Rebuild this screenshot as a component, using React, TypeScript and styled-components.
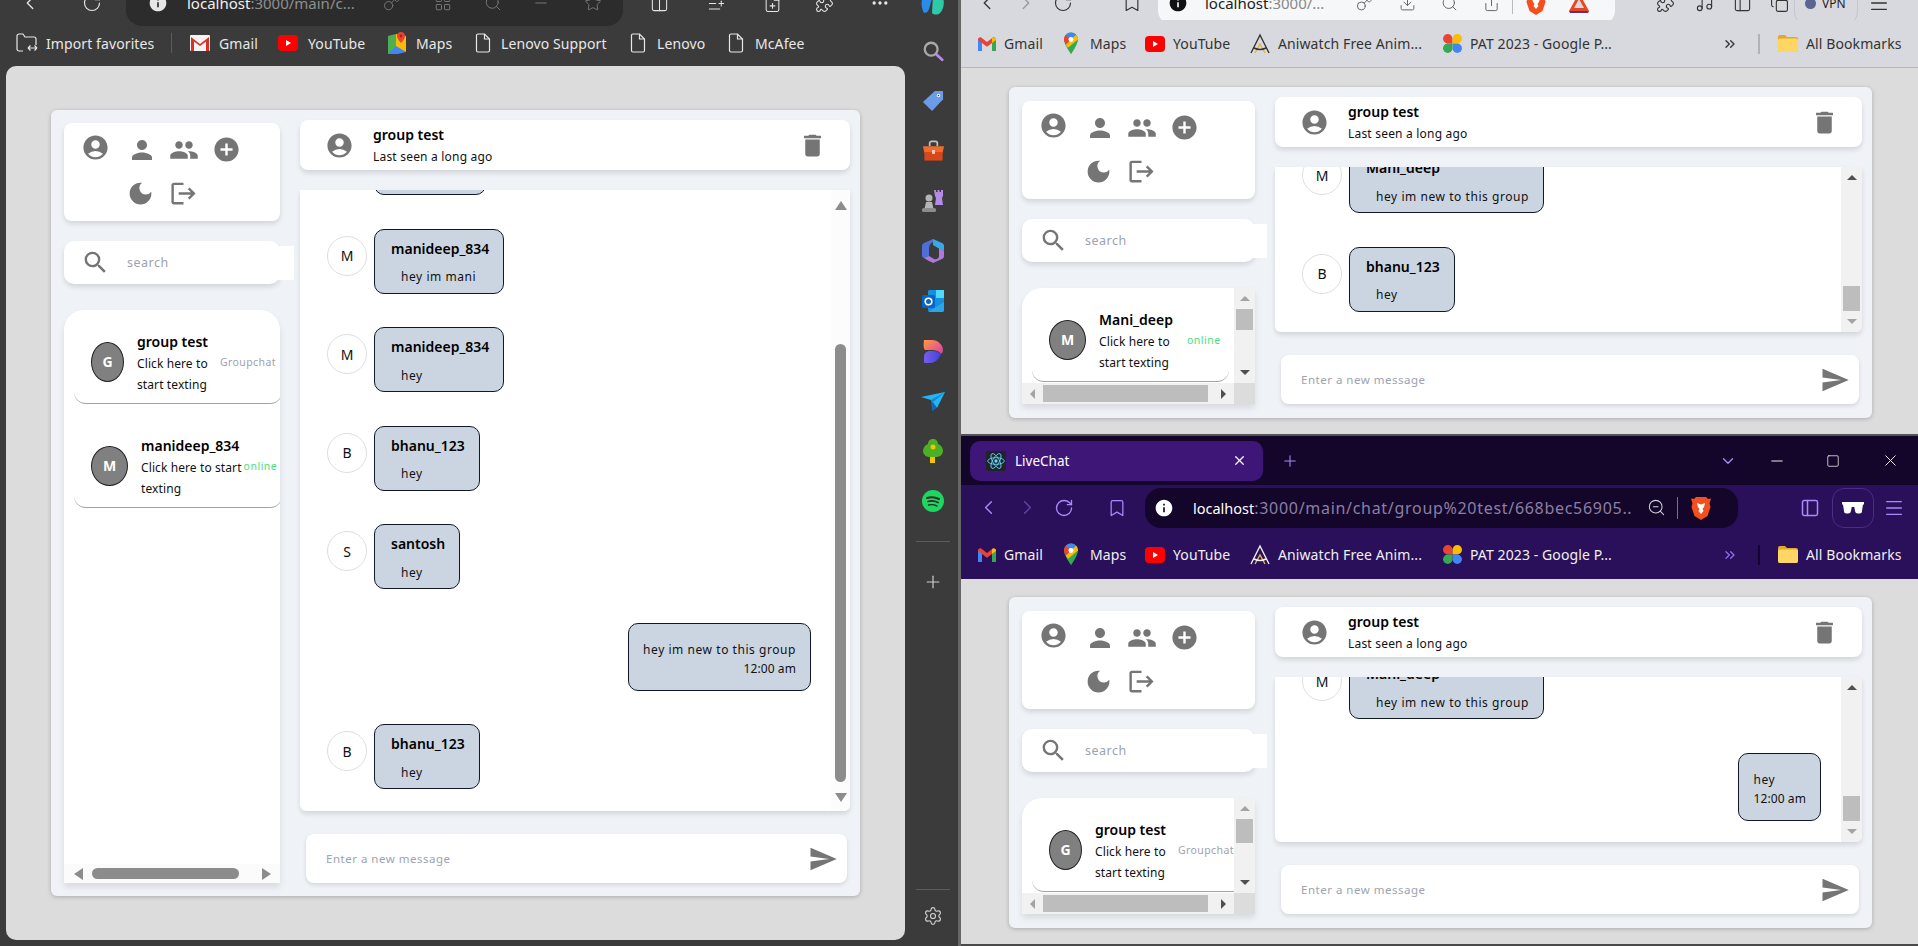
import React from "react";
import styled, { createGlobalStyle } from "styled-components";
import {
  MdAccountCircle,
  MdPerson,
  MdPeople,
  MdAddCircle,
  MdDarkMode,
  MdLogout,
  MdSearch,
  MdDelete,
  MdSend,
  MdInfo,
} from "react-icons/md";
import {
  ChevronLeft,
  ChevronRight,
  RotateCw,
  Bookmark as BookmarkIcon,
  Key,
  LayoutGrid,
  Search,
  Star,
  Columns2,
  ListPlus,
  FilePlus,
  MoreHorizontal,
  ZoomOut,
  Menu,
  Minus,
  Square,
  X,
  Plus,
  ChevronDown,
  ChevronsRight,
  PanelLeft,
  Settings,
  Music,
  Puzzle,
  Download,
  Share,
  Copy,
} from "lucide-react";

const GlobalStyle = createGlobalStyle`
  html, body {
    margin: 0;
    padding: 0;
    background: #3b3b3b;
  }
  * {
    box-sizing: border-box;
  }
`;

const Screen = styled.div`
  width: 1918px;
  height: 946px;
  display: flex;
  overflow: hidden;
  font-family: "Noto Sans", "Open Sans", sans-serif;
`;

/* ---------- browser chrome ---------- */

const LeftWindow = styled.div`
  width: 961px;
  flex: none;
  background: #3b3b3b;
  border-right: 3px solid #666;
  display: flex;
`;

const LeftMain = styled.div`
  width: 905px;
  flex: none;
  display: flex;
  flex-direction: column;
  padding-bottom: 6px;
`;

const RightStack = styled.div`
  flex: 1;
  display: flex;
  flex-direction: column;
`;

const TopBar = styled.div<{ $h: number }>`
  height: ${(p) => p.$h}px;
  overflow: hidden;
`;

const ClippedRow = styled.div<{ $color: string }>`
  height: 46px;
  margin-top: -20px;
  display: flex;
  align-items: center;
  color: ${(p) => p.$color};
`;

const Slot = styled.div<{ $w: number; $ml?: number; $color?: string }>`
  width: ${(p) => p.$w}px;
  margin-left: ${(p) => p.$ml || 0}px;
  flex: none;
  display: flex;
  align-items: center;
  justify-content: center;
  ${(p) => (p.$color ? `color: ${p.$color};` : "")}
`;

const AddressBar = styled.div<{ $bg: string; $w: number; $ml: number; $h?: number }>`
  width: ${(p) => p.$w}px;
  margin-left: ${(p) => p.$ml}px;
  height: ${(p) => p.$h || 46}px;
  flex: none;
  background: ${(p) => p.$bg};
  border-radius: 16px;
  display: flex;
  align-items: center;
`;

const Url = styled.span<{ $w: number; $ml: number; $color: string; $dim: string; $wide?: boolean }>`
  width: ${(p) => p.$w}px;
  margin-left: ${(p) => p.$ml}px;
  flex: none;
  font-size: ${(p) => (p.$wide ? 16 : 15)}px;
  letter-spacing: ${(p) => (p.$wide ? 0.7 : 0)}px;
  white-space: nowrap;
  overflow: hidden;
  color: ${(p) => p.$dim};
  & > b {
    font-weight: 400;
    font-size: ${(p) => (p.$wide ? 14.5 : 15)}px;
    letter-spacing: 0;
    color: ${(p) => p.$color};
  }
`;

const Separator = styled.div<{ $color: string; $ml: number; $h: number; $w?: number }>`
  width: ${(p) => p.$w || 1}px;
  height: ${(p) => p.$h}px;
  margin-left: ${(p) => p.$ml}px;
  flex: none;
  background: ${(p) => p.$color};
`;

const BookmarkBar = styled.div<{ $h: number; $line?: string; $bg?: string; $pb?: number }>`
  height: ${(p) => p.$h}px;
  padding-bottom: ${(p) => p.$pb || 0}px;
  flex: none;
  display: flex;
  align-items: center;
  ${(p) => (p.$line ? `border-bottom: 1px solid ${p.$line};` : "")}
  ${(p) => (p.$bg ? `background: ${p.$bg};` : "")}
`;

const BookmarkItem = styled.div<{ $ml: number }>`
  margin-left: ${(p) => p.$ml}px;
  flex: none;
  display: flex;
  align-items: center;
`;

const BookmarkLabel = styled.span<{ $w: number; $ml: number; $color: string }>`
  width: ${(p) => p.$w}px;
  margin-left: ${(p) => p.$ml}px;
  font-size: 14px;
  letter-spacing: 0.1px;
  white-space: nowrap;
  color: ${(p) => p.$color};
`;

const Viewport = styled.div`
  flex: 1;
  min-height: 0;
  margin-left: 6px;
  background: #dcdcdc;
  border-radius: 10px;
  padding: 44px 0 0 45px;
`;

const SideRail = styled.div`
  flex: 1;
  min-width: 0;
  overflow: hidden;
  display: flex;
  flex-direction: column;
  align-items: center;
  padding-left: 3px;
`;

const RailLogo = styled.div`
  height: 26px;
  margin-top: -8px;
  margin-bottom: 8px;
  flex: none;
`;

const RailIcon = styled.div`
  width: 30px;
  height: 50px;
  flex: none;
  display: flex;
  align-items: center;
  justify-content: center;
`;

const RailRule = styled.div<{ $mt: number }>`
  width: 34px;
  height: 1px;
  flex: none;
  background: #5c5c5c;
  margin-top: ${(p) => p.$mt}px;
`;

const RailButton = styled.div<{ $h: number }>`
  height: ${(p) => p.$h}px;
  flex: none;
  display: flex;
  align-items: center;
  color: #d0d0d0;
`;

const TopWindow = styled.div`
  height: 436px;
  flex: none;
  background: #dcdcdc;
  border-bottom: 2px solid #555;
  display: flex;
  flex-direction: column;
`;

const LightChrome = styled.div`
  background: #d8d9de;
  flex: none;
`;

const BottomWindow = styled.div`
  flex: 1;
  min-height: 0;
  background: #dcdcdc;
  display: flex;
  flex-direction: column;
  border-bottom: 2px solid #4a4a4a;
`;

const TabStrip = styled.div`
  height: 49px;
  flex: none;
  background: #14062b;
  display: flex;
  align-items: center;
  color: #a78bfa;
`;

const Tab = styled.div`
  width: 293px;
  height: 40px;
  margin-left: 9px;
  flex: none;
  background: #3d1678;
  border-radius: 10px;
  display: flex;
  align-items: center;
  color: #fff;
  font-size: 13.5px;
`;

const TabTitle = styled.span`
  width: 212px;
  margin-left: 8px;
`;

const NavBar = styled.div`
  height: 45px;
  flex: none;
  background: #2a0f5a;
  display: flex;
  align-items: center;
  color: #a78bfa;
`;

const GlassesBox = styled.div`
  width: 42px;
  height: 40px;
  margin-left: 10px;
  flex: none;
  display: flex;
  align-items: center;
  justify-content: center;
  border: 1px solid #4b2c86;
  border-radius: 12px;
`;

const ProfilePill = styled.div`
  width: 64px;
  height: 46px;
  margin-left: 3px;
  flex: none;
  display: flex;
  align-items: center;
  padding-left: 10px;
  gap: 6px;
  border: 1px solid #c5c6cc;
  border-radius: 14px;
  font-size: 12px;
  color: #222;
  & > i {
    width: 11px;
    height: 11px;
    border-radius: 50%;
    background: #5b6390;
    display: block;
  }
`;

const WindowContent = styled.div<{ $pt: number }>`
  flex: 1;
  min-height: 0;
  padding: ${(p) => p.$pt}px 0 0 48px;
`;

/* ---------- chat app ---------- */

const Panel = styled.div<{ $w: number; $h: number; $pad: number }>`
  width: ${(p) => p.$w}px;
  height: ${(p) => p.$h}px;
  padding: 0 10px ${(p) => p.$pad}px 13px;
  background: #eff3f8;
  border-radius: 6px;
  box-shadow: 0 1px 4px rgba(0, 0, 0, 0.22);
  display: flex;
  gap: 20px;
`;

const SideColumn = styled.div<{ $w: number; $pad: number }>`
  width: ${(p) => p.$w}px;
  flex: none;
  padding-top: ${(p) => p.$pad}px;
  display: flex;
  flex-direction: column;
`;

const MenuCard = styled.div`
  height: 98px;
  flex: none;
  background: #fff;
  border-radius: 8px;
  box-shadow: 0 3px 5px rgba(0, 0, 0, 0.12);
  padding-top: 5px;
`;

const MenuIcons = styled.div`
  width: 194px;
  display: flex;
  flex-wrap: wrap;
  justify-content: center;
  color: #757575;
`;

const MenuIcon = styled.div<{ $lift?: boolean; $nudge?: boolean }>`
  width: 42.5px;
  height: 43.5px;
  display: flex;
  align-items: center;
  justify-content: center;
  ${(p) => (p.$lift ? "margin-right: 3.5px; padding-bottom: 5px;" : "")}
  ${(p) => (p.$nudge ? "margin-left: 2px;" : "")}
`;

const SearchCard = styled.div<{ $over: number }>`
  height: 43px;
  margin-top: 20px;
  flex: none;
  display: flex;
  align-items: center;
  background: #fff;
  border-radius: 10px;
  box-shadow: 0 3px 5px rgba(0, 0, 0, 0.12);
  padding-left: 17px;
  color: #757575;
  & > input {
    margin-right: -${(p) => p.$over}px;
  }
`;

const SearchInput = styled.input`
  flex: 1;
  min-width: 0;
  height: 34px;
  margin-left: 2px;
  padding: 0 0 0 15px;
  border: 0;
  outline: 0;
  background: #fff;
  font: 12.5px "Noto Sans", sans-serif;
  letter-spacing: 0.5px;
  &::placeholder {
    color: #9ca3af;
  }
`;

const ListCard = styled.div<{ $round: boolean }>`
  flex: 1;
  min-height: 0;
  margin-top: 26px;
  display: flex;
  flex-direction: column;
  background: #fff;
  border-radius: ${(p) => (p.$round ? "20px 20px 0 0" : "20px 0 0 0")};
  box-shadow: 0 4px 6px rgba(0, 0, 0, 0.1);
  overflow: hidden;
`;

const ListBody = styled.div`
  flex: 1;
  min-height: 0;
  display: flex;
`;

const ListView = styled.div`
  flex: 1;
  min-width: 0;
  overflow: hidden;
  display: flex;
  flex-direction: column;
  gap: 10px;
`;

const ChatItem = styled.div<{ $w: number }>`
  width: ${(p) => p.$w}px;
  height: 94px;
  margin-left: 10px;
  flex: none;
  padding: 10px 0 0 17px;
  display: flex;
  align-items: center;
  border-bottom: 1px solid #9ca3af;
  border-radius: 0 0 12px 12px;
`;

const ItemAvatar = styled.div<{ $w: number }>`
  width: ${(p) => p.$w}px;
  height: 40px;
  flex: none;
  display: flex;
  align-items: center;
  justify-content: center;
  background: #808080;
  border: 1px solid #222;
  border-radius: 50%;
  color: #fff;
  font-size: 14px;
  font-weight: 700;
`;

const ItemText = styled.div`
  margin-left: 13px;
  padding-top: 2px;
  flex: none;
`;

const ItemName = styled.div`
  font-size: 14px;
  font-weight: 600;
  line-height: 23px;
  color: #000;
`;

const ItemHint = styled.div`
  font-size: 12px;
  line-height: 21px;
  letter-spacing: 0.1px;
  color: #111;
  white-space: nowrap;
`;

const ItemTag = styled.span<{ $ml: number; $online: boolean }>`
  margin-left: ${(p) => p.$ml}px;
  flex: none;
  font-size: 10.5px;
  letter-spacing: ${(p) => (p.$online ? 0.5 : 0.4)}px;
  color: ${(p) => (p.$online ? "#4ade80" : "#9ca3af")};
`;

const MainColumn = styled.div`
  flex: 1;
  min-width: 0;
  padding-top: 10px;
  display: flex;
  flex-direction: column;
`;

const Header = styled.div`
  height: 50px;
  flex: none;
  padding: 0 23px 0 25px;
  display: flex;
  align-items: center;
  background: #fff;
  border-radius: 8px;
  box-shadow: 0 3px 5px rgba(0, 0, 0, 0.12);
  color: #757575;
`;

const HeaderText = styled.div`
  flex: 1;
  margin-left: 19px;
  padding-top: 2px;
`;

const HeaderName = styled.div`
  font-size: 14px;
  font-weight: 600;
  line-height: 20px;
  color: #000;
`;

const HeaderSub = styled.div`
  margin-top: 2px;
  font-size: 12px;
  line-height: 20px;
  letter-spacing: 0.2px;
  color: #111;
`;

const MessagePane = styled.div`
  flex: 1;
  min-height: 0;
  margin-top: 20px;
  display: flex;
  background: #fff;
  border-radius: 0 0 6px 6px;
  box-shadow: 0 3px 5px rgba(0, 0, 0, 0.12);
  overflow: hidden;
`;

const MessageScroll = styled.div`
  flex: 1;
  min-width: 0;
  overflow: hidden;
`;

const Thread = styled.div<{ $offset: number }>`
  margin-top: ${(p) => p.$offset}px;
  padding: 0 20px 0 27px;
  display: flex;
  flex-direction: column;
  gap: 33.5px;
`;

const Row = styled.div<{ $mine?: boolean }>`
  display: flex;
  gap: 7px;
  justify-content: ${(p) => (p.$mine ? "flex-end" : "flex-start")};
`;

const Initial = styled.div`
  width: 40px;
  height: 40px;
  margin-top: 7px;
  flex: none;
  display: flex;
  align-items: center;
  justify-content: center;
  background: #fff;
  border: 1px solid #dedede;
  border-radius: 50%;
  font-size: 14px;
  color: #111;
`;

const Bubble = styled.div`
  height: 65px;
  flex: none;
  background: #cbd5e1;
  border: 1px solid #111827;
  border-radius: 10px;
  padding: 9px 14px 0 16px;
`;

const MineBubble = styled.div`
  height: 68px;
  flex: none;
  display: flex;
  flex-direction: column;
  justify-content: center;
  background: #cbd5e1;
  border: 1px solid #111827;
  border-radius: 10px;
  padding: 4px 14px 0;
`;

const Sender = styled.div`
  font-size: 14px;
  font-weight: 600;
  line-height: 20px;
  color: #000;
`;

const Body = styled.div`
  margin: 9.5px 0 0 10px;
  font-size: 12px;
  line-height: 18px;
  letter-spacing: 0.55px;
  color: #111;
`;

const MineBody = styled.div`
  font-size: 12px;
  line-height: 19px;
  letter-spacing: 0.55px;
  color: #111;
`;

const Time = styled.div`
  font-size: 12px;
  line-height: 19px;
  letter-spacing: 0.1px;
  text-align: right;
  color: #111;
`;

const Composer = styled.div`
  height: 49px;
  margin: 23px 3px 0 6px;
  flex: none;
  display: flex;
  align-items: center;
  padding: 0 9px 0 20px;
  background: #fff;
  border-radius: 8px;
  box-shadow: 0 2px 4px rgba(0, 0, 0, 0.12);
  color: #757575;
`;

const ComposerInput = styled.input`
  flex: 1;
  min-width: 0;
  padding: 0;
  border: 0;
  outline: 0;
  background: transparent;
  font: 11.5px "Noto Sans", sans-serif;
  letter-spacing: 0.5px;
  &::placeholder {
    color: #9ca3af;
  }
`;

/* ---------- scrollbars ---------- */

const Track = styled.div<{ $slim: boolean }>`
  width: ${(p) => (p.$slim ? 19 : 21)}px;
  flex: none;
  display: flex;
  flex-direction: column;
  align-items: center;
  background: ${(p) => (p.$slim ? "#fcfcfc" : "#f1f1f1")};
`;

const ArrowCell = styled.div<{ $slim: boolean; $end?: boolean }>`
  width: ${(p) => (p.$slim ? 19 : 21)}px;
  height: ${(p) => (p.$slim ? 30 : 21)}px;
  flex: none;
  display: flex;
  align-items: center;
  justify-content: center;
  ${(p) => (p.$end ? "margin-top: auto;" : "")}
`;

const Triangle = styled.div<{ $dir: "up" | "down" | "left" | "right"; $color: string; $big: boolean }>`
  width: 0;
  height: 0;
  --a: ${(p) => (p.$big ? 6 : 5)}px;
  --b: ${(p) => (p.$big ? 9 : 5)}px;
  ${(p) =>
    p.$dir === "up"
      ? `border-left: var(--a) solid transparent; border-right: var(--a) solid transparent; border-bottom: var(--b) solid ${p.$color};`
      : p.$dir === "down"
      ? `border-left: var(--a) solid transparent; border-right: var(--a) solid transparent; border-top: var(--b) solid ${p.$color};`
      : p.$dir === "left"
      ? `border-top: var(--a) solid transparent; border-bottom: var(--a) solid transparent; border-right: var(--b) solid ${p.$color};`
      : `border-top: var(--a) solid transparent; border-bottom: var(--a) solid transparent; border-left: var(--b) solid ${p.$color};`}
`;

const ThumbV = styled.div<{ $slim: boolean; $before: number; $size: number }>`
  width: ${(p) => (p.$slim ? 11 : 17)}px;
  height: ${(p) => p.$size}px;
  margin-top: ${(p) => p.$before}px;
  flex: none;
  background: ${(p) => (p.$slim ? "#8c8c8c" : "#bdbdbd")};
  border-radius: ${(p) => (p.$slim ? 6 : 0)}px;
`;

const HBar = styled.div<{ $slim: boolean }>`
  height: ${(p) => (p.$slim ? 19 : 21)}px;
  flex: none;
  display: flex;
  align-items: center;
  background: ${(p) => (p.$slim ? "#fbfbfb" : "#f1f1f1")};
`;

const HTrack = styled.div`
  flex: 1;
  min-width: 0;
  display: flex;
  align-items: center;
`;

const HArrow = styled.div<{ $w: number; $end?: boolean }>`
  width: ${(p) => p.$w}px;
  flex: none;
  display: flex;
  justify-content: center;
  ${(p) => (p.$end ? "margin-left: auto;" : "")}
`;

const ThumbH = styled.div<{ $slim: boolean; $w: number }>`
  width: ${(p) => p.$w}px;
  height: ${(p) => (p.$slim ? 11 : 17)}px;
  flex: none;
  background: ${(p) => (p.$slim ? "#8c8c8c" : "#bdbdbd")};
  border-radius: ${(p) => (p.$slim ? 6 : 0)}px;
`;

const Corner = styled.div`
  width: 21px;
  height: 21px;
  flex: none;
  background: #dcdcdc;
`;

/* ---------- logos ---------- */

const GmailLogo = () => (
  <svg width="18" height="14" viewBox="0 0 18 14">
    <path d="M0 2.5V14h4V6l5 3.8L14 6v8h4V2.5C18 .6 16 -.5 14.5.7L9 4.9 3.5.7C2-.5 0 .6 0 2.5z" fill="#ea4335" />
    <path d="M0 3v11h4V6z" fill="#4285f4" />
    <path d="M18 3v11h-4V6z" fill="#34a853" />
    <path d="M14 1v5l4-3V2.5C18 .6 15.6-.3 14 1z" fill="#fbbc04" />
  </svg>
);

const GmailBoxLogo = () => (
  <svg width="20" height="16" viewBox="0 0 20 16">
    <rect width="20" height="16" rx="1" fill="#f3f3f3" />
    <path d="M1 16V2l9 7 9-7v14h-3V6.500L10 11 4 6.500V16z" fill="#d93025" />
  </svg>
);

const YouTubeLogo = () => (
  <svg width="20" height="16" viewBox="0 0 20 16">
    <rect width="20" height="16" rx="4" fill="#f00" />
    <path d="M8 5l5 3-5 3z" fill="#fff" />
  </svg>
);

const MapsLogo = () => (
  <svg width="14" height="23" viewBox="0 0 18 28">
    <path d="M9 0C4 0 0 4 0 9c0 6 9 19 9 19s9-13 9-19c0-5-4-9-9-9z" fill="#34a853" />
    <path d="M9 0C6.500 0 4.200 1 2.600 2.700L9 9l6.500-6.200C13.900 1 11.500 0 9 0z" fill="#4285f4" />
    <path d="M2.600 2.700C1 4.300 0 6.500 0 9c0 2 1 4.400 2.400 6.700L9 9z" fill="#ea4335" />
    <path d="M15.500 2.800L9 9l-6.600 6.700c.8 1.300 1.700 2.600 2.600 3.800L18 9c0-2.400-1-4.600-2.500-6.200z" fill="#fbbc04" />
    <circle cx="9" cy="9" r="3.200" fill="#fff" />
  </svg>
);

const MapTileLogo = () => (
  <svg width="18" height="22" viewBox="0 0 18 22">
    <path d="M0 4l8-2v18l-8 2z" fill="#4caf50" />
    <path d="M8 2l10 2v16l-10-2z" fill="#fbbc04" />
    <path d="M0 22l8-8 10 6-8 2z" fill="#4285f4" />
    <path d="M13 0c-2.500 0-4 2-4 4 0 3 4 7 4 7s4-4 4-7c0-2-1.500-4-4-4z" fill="#ea4335" />
    <circle cx="13" cy="4" r="1.400" fill="#a52714" />
  </svg>
);

const DocLogo = () => (
  <svg width="16" height="20" viewBox="0 0 16 20" fill="none" stroke="#e8e8e8" strokeWidth="1.200">
    <path d="M1.500 2.500a1.500 1.500 0 0 1 1.500-1.500h6.500l5 5v11.500a1.500 1.500 0 0 1-1.500 1.500H3a1.500 1.500 0 0 1-1.500-1.500z" />
    <path d="M9.500 1v5h5" />
  </svg>
);

const ImportLogo = () => (
  <svg width="22" height="20" viewBox="0 0 22 20" fill="none" stroke="#e8e8e8" strokeWidth="1.200">
    <path d="M7 18H3a2 2 0 0 1-2-2V3a2 2 0 0 1 2-2h4l2 3h9a2 2 0 0 1 2 2v6" />
    <path d="M12 15h9M12 15l2.500-2.500M12 15l2.500 2.500M21 15l-2.500-2.500M21 15l-2.500 2.500" />
  </svg>
);

const AniwatchLogo = ({ color }: { color: string }) => (
  <svg width="20" height="22" viewBox="0 0 20 22" fill="none" stroke={color} strokeWidth="1.400">
    <path d="M1 20L10 2l9 18" />
    <path d="M5 20l5-9 5 9" stroke="#e3b341" />
    <path d="M4 15q6 3 12 0" />
  </svg>
);

const PhotosLogo = () => (
  <svg width="19" height="19" viewBox="0 0 20 20">
    <path d="M5 0a5 5 0 0 1 5 5v5H5A5 5 0 0 1 5 0z" fill="#ea4335" />
    <path d="M20 5a5 5 0 0 1-5 5h-5V5a5 5 0 0 1 10 0z" fill="#fbbc04" />
    <path d="M15 20a5 5 0 0 1-5-5v-5h5a5 5 0 0 1 0 10z" fill="#4285f4" />
    <path d="M0 15a5 5 0 0 1 5-5h5v5a5 5 0 0 1-10 0z" fill="#34a853" />
  </svg>
);

const FolderLogo = () => (
  <svg width="20" height="17" viewBox="0 0 20 17">
    <path d="M0 2a2 2 0 0 1 2-2h5l2 2h9a2 2 0 0 1 2 2v11a2 2 0 0 1-2 2H2a2 2 0 0 1-2-2z" fill="#e0a92c" />
    <rect y="3.500" width="20" height="13.500" rx="2" fill="#fdd663" />
  </svg>
);

const BraveLogo = () => (
  <svg width="20" height="24" viewBox="0 0 20 24">
    <path d="M5 1h10l2 2 3-.5-1.500 5 1 3.500-3 9L10 24l-6.500-4-3-9 1-3.500L0 2.500 3 3z" fill="#f4501e" />
    <path d="M6 7l4 1.500L14 7l-1 4-1.500 2 1 2-2.500 3-2.500-3 1-2L7 11z" fill="#fff" />
  </svg>
);

const DeltaLogo = () => (
  <svg width="20" height="20" viewBox="0 0 20 20">
    <path d="M10 0l10 18H0z" fill="#e8471f" />
    <path d="M10 6l5 9H5z" fill="#d8d9de" />
    <path d="M0 18h20l-1 2H1z" fill="#5a2ca0" />
  </svg>
);

const ReactLogo = () => (
  <svg width="20" height="22" viewBox="-12 -12 24 24" fill="none" stroke="#61dafb" strokeWidth="1">
    <rect x="-12" y="-12" width="24" height="24" rx="3" fill="#20232a" stroke="none" />
    <circle r="2" fill="#61dafb" stroke="none" />
    <ellipse rx="10" ry="4" />
    <ellipse rx="10" ry="4" transform="rotate(60)" />
    <ellipse rx="10" ry="4" transform="rotate(120)" />
  </svg>
);

const SunglassesIcon = () => (
  <svg width="22" height="13" viewBox="0 0 22 13" fill="#fff">
    <path d="M0 1h22v2.500h-1L20 10a2.500 2.500 0 0 1-2.500 2.500H16a3 3 0 0 1-3-2.500l-.7-4h-2.600L9 10a3 3 0 0 1-3 2.500H4.500A2.500 2.500 0 0 1 2 10L1 3.500H0z" />
  </svg>
);

const CopilotLogo = () => (
  <svg width="26" height="26" viewBox="0 0 26 26">
    <path d="M3 4c3-4 8-4 10-1l-4 14c-1 3-3 4-5 4-3-5-3-12-1-17z" fill="#2b8ce6" />
    <path d="M13 3c3-2 9-1 10 3 2 6 0 12-3 15-2 2-6 2-8 0z" fill="#2fc9a8" />
  </svg>
);

const GlassIcon = () => (
  <svg width="22" height="22" viewBox="0 0 24 24">
    <circle cx="10" cy="10" r="7" fill="none" stroke="#a9a9a9" strokeWidth="2.500" />
    <path d="M15.500 15.500l6.500 6" stroke="#b78ae8" strokeWidth="3" strokeLinecap="round" />
  </svg>
);

const TagIcon = () => (
  <svg width="22" height="22" viewBox="0 0 24 24">
    <path d="M14 1h8a1 1 0 0 1 1 1v8L11 23 1 13z" fill="#6c9be8" />
    <circle cx="18" cy="6" r="1.800" fill="#fff" />
    <circle cx="18" cy="6" r="0.900" fill="#2a4f8f" />
  </svg>
);

const ToolboxIcon = () => (
  <svg width="23" height="22" viewBox="0 0 24 22">
    <path d="M8 6V3a2 2 0 0 1 2-2h4a2 2 0 0 1 2 2v3" fill="none" stroke="#bfbfbf" strokeWidth="1.800" />
    <path d="M1 6h22l-1.500 7h-19z" fill="#ef6c2e" />
    <path d="M2.500 12h19v9h-19z" fill="#d8481b" />
    <rect x="10.500" y="10" width="3" height="4" fill="#e6d3c8" />
  </svg>
);

const ChessIcon = () => (
  <svg width="24" height="24" viewBox="0 0 24 24">
    <path d="M13 1h2v2h1.500V1h2v2H20V1h2v6l-1 2 1 7h-8l1-7-1-2z" fill="#b48be6" />
    <circle cx="8" cy="9" r="3.500" fill="#b5b5b5" />
    <path d="M5 13h6l1.500 7h-9z" fill="#b5b5b5" />
    <rect x="1" y="19" width="14" height="4" rx="1.500" fill="#8c8c8c" />
  </svg>
);

const M365Icon = () => (
  <svg width="22" height="24" viewBox="0 0 22 24">
    <path d="M11 0l9 4c2 1 2 2 2 4v4l-6-3-5-3z" fill="#37a9e8" />
    <path d="M11 0L2 4C0 5 0 6 0 8v8c0 2 1 3 2 3l5-2V9c0-3 2-5 4-6z" fill="#4e6fd8" />
    <path d="M22 12v4c0 2 0 3-2 4l-9 4c-2-1-6-3-9-5l5-2 5 3c3 1 5-1 5-3v-8z" fill="#b078dc" />
  </svg>
);

const OutlookIcon = () => (
  <svg width="22" height="22" viewBox="0 0 22 22">
    <path d="M7 0h13a2 2 0 0 1 2 2v18a2 2 0 0 1-2 2H8a2 2 0 0 1-2-2V1z" fill="#1490df" />
    <path d="M14 0h8v8h-8z" fill="#50d9ff" />
    <path d="M6 22l16-10v8a2 2 0 0 1-2 2z" fill="#28a8ea" />
    <rect y="5" width="13" height="13" rx="1.500" fill="#0a64c2" />
    <circle cx="6.500" cy="11.500" r="3.300" fill="none" stroke="#fff" strokeWidth="1.600" />
  </svg>
);

const LoopIcon = () => (
  <svg width="20" height="23" viewBox="0 0 20 23">
    <defs>
      <linearGradient id="loopA" x1="0" y1="0" x2="1" y2="1">
        <stop offset="0" stopColor="#ff9a3c" />
        <stop offset="1" stopColor="#d63bb0" />
      </linearGradient>
      <linearGradient id="loopB" x1="0" y1="0" x2="1" y2="0">
        <stop offset="0" stopColor="#7b5cf0" />
        <stop offset="1" stopColor="#3a46d8" />
      </linearGradient>
    </defs>
    <path d="M1 0h8c6 0 11 5 11 10 0 2-1 3-2 4-2-3-5-4-9-4H3C1 10 0 8 1 0z" fill="url(#loopA)" />
    <path d="M1 17c0-4 3-6 6-6h2c4 0 7 1 9 3-2 5-6 9-11 9H2c-1 0-1-1-1-2z" fill="url(#loopB)" />
  </svg>
);

const PlaneIcon = () => (
  <svg width="24" height="19" viewBox="0 0 24 19">
    <path d="M0 5L24 0 16 16l-6-8z" fill="#25b4f5" />
    <path d="M10 8l1 11 5-3z" fill="#1565c0" />
    <path d="M10 8L24 0 11 11z" fill="#0a8ed8" />
  </svg>
);

const TreeIcon = () => (
  <svg width="20" height="24" viewBox="0 0 20 24">
    <rect x="7" y="16" width="5" height="8" fill="#f2c40f" />
    <path d="M10 0c3 0 5 2 5 5 3 1 5 4 5 7 0 3-3 6-6 6H6c-3 0-6-3-6-6 0-3 2-6 5-7 0-3 2-5 5-5z" fill="#4caf24" />
    <circle cx="10" cy="8" r="2.500" fill="#f2c40f" />
  </svg>
);

const SpotifyIcon = () => (
  <svg width="22" height="22" viewBox="0 0 22 22" fill="none" stroke="#2b2b2b" strokeLinecap="round">
    <circle cx="11" cy="11" r="11" fill="#1ed760" stroke="none" />
    <path d="M5 8q6-2 12 1" strokeWidth="2" />
    <path d="M6 11.500q5-1.500 10 1" strokeWidth="1.700" />
    <path d="M6.500 15q4.500-1 8.500 1" strokeWidth="1.400" />
  </svg>
);

/* ---------- chat data and parts ---------- */

type Message = { who: string; name: string; text: string; mine?: boolean; time?: string };
type Contact = { letter: string; avatarW: number; name: string; lines: [string, string?]; tag: string; tagMl: number };

const groupItem = (tagMl: number): Contact => ({
  letter: "G",
  avatarW: 33,
  name: "group test",
  lines: ["Click here to", "start texting"],
  tag: "Groupchat",
  tagMl,
});

const VScroll: React.FC<{ slim?: boolean; before: number; size: number; topDark?: boolean }> = ({
  slim = false,
  before,
  size,
  topDark = true,
}) => {
  const on = "#505050";
  const off = "#a3a3a3";
  return (
    <Track $slim={slim}>
      <ArrowCell $slim={slim}>
        <Triangle $dir="up" $big={slim} $color={slim ? "#8c8c8c" : topDark ? on : off} />
      </ArrowCell>
      <ThumbV $slim={slim} $before={before} $size={size} />
      <ArrowCell $slim={slim} $end>
        <Triangle $dir="down" $big={slim} $color={slim ? "#8c8c8c" : topDark ? off : on} />
      </ArrowCell>
    </Track>
  );
};

interface ChatProps {
  slim?: boolean;
  panelW: number;
  panelH: number;
  pad: number;
  sideW: number;
  searchOver: number;
  itemW: number;
  contacts: Contact[];
  listThumb?: [number, number];
  messages: Message[];
  offset: number;
  msgBefore: number;
  msgSize: number;
}

const ChatPanel: React.FC<ChatProps> = ({
  slim = false,
  panelW,
  panelH,
  pad,
  sideW,
  searchOver,
  itemW,
  contacts,
  listThumb,
  messages,
  offset,
  msgBefore,
  msgSize,
}) => (
  <Panel $w={panelW} $h={panelH} $pad={pad}>
    <SideColumn $w={sideW} $pad={pad}>
      <MenuCard>
        <MenuIcons>
          <MenuIcon $lift>
            <MdAccountCircle size={29} />
          </MenuIcon>
          <MenuIcon>
            <MdPerson size={30} />
          </MenuIcon>
          <MenuIcon>
            <MdPeople size={30} />
          </MenuIcon>
          <MenuIcon>
            <MdAddCircle size={29} />
          </MenuIcon>
          <MenuIcon $nudge>
            <MdDarkMode size={29} />
          </MenuIcon>
          <MenuIcon>
            <MdLogout size={29} />
          </MenuIcon>
        </MenuIcons>
      </MenuCard>
      <SearchCard $over={searchOver}>
        <MdSearch size={29} />
        <SearchInput placeholder="search" readOnly />
      </SearchCard>
      <ListCard $round={slim}>
        <ListBody>
          <ListView>
            {contacts.map((c) => (
              <ChatItem key={c.name} $w={itemW}>
                <ItemAvatar $w={c.avatarW}>{c.letter}</ItemAvatar>
                <ItemText>
                  <ItemName>{c.name}</ItemName>
                  <ItemHint>{c.lines[0]}</ItemHint>
                  <ItemHint>{c.lines[1]}</ItemHint>
                </ItemText>
                <ItemTag $ml={c.tagMl} $online={c.tag === "online"}>
                  {c.tag}
                </ItemTag>
              </ChatItem>
            ))}
          </ListView>
          {listThumb && <VScroll before={listThumb[0]} size={listThumb[1]} topDark={false} />}
        </ListBody>
        <HBar $slim={slim}>
          <HTrack>
            <HArrow $w={slim ? 28 : 21}>
              <Triangle $dir="left" $big={slim} $color={slim ? "#8c8c8c" : "#a3a3a3"} />
            </HArrow>
            <ThumbH $slim={slim} $w={slim ? 147 : 165} />
            <HArrow $w={slim ? 28 : 21} $end>
              <Triangle $dir="right" $big={slim} $color={slim ? "#8c8c8c" : "#505050"} />
            </HArrow>
          </HTrack>
          {!slim && <Corner />}
        </HBar>
      </ListCard>
    </SideColumn>
    <MainColumn>
      <Header>
        <MdAccountCircle size={29} />
        <HeaderText>
          <HeaderName>group test</HeaderName>
          <HeaderSub>Last seen a long ago</HeaderSub>
        </HeaderText>
        <MdDelete size={29} />
      </Header>
      <MessagePane>
        <MessageScroll>
          <Thread $offset={offset}>
            {messages.map((m, i) =>
              m.mine ? (
                <Row key={i} $mine>
                  <MineBubble>
                    <MineBody>{m.text}</MineBody>
                    <Time>{m.time}</Time>
                  </MineBubble>
                </Row>
              ) : (
                <Row key={i}>
                  <Initial>{m.who}</Initial>
                  <Bubble>
                    <Sender>{m.name}</Sender>
                    <Body>{m.text}</Body>
                  </Bubble>
                </Row>
              )
            )}
          </Thread>
        </MessageScroll>
        <VScroll slim={slim} before={msgBefore} size={msgSize} />
      </MessagePane>
      <Composer>
        <ComposerInput placeholder="Enter a new message" readOnly />
        <MdSend size={30} />
      </Composer>
    </MainColumn>
  </Panel>
);

const leftMessages: Message[] = [
  { who: "S", name: "santosh_12", text: "hey im new" },
  { who: "M", name: "manideep_834", text: "hey im mani" },
  { who: "M", name: "manideep_834", text: "hey" },
  { who: "B", name: "bhanu_123", text: "hey" },
  { who: "S", name: "santosh", text: "hey" },
  { who: "", name: "", text: "hey im new to this group", mine: true, time: "12:00 am" },
  { who: "B", name: "bhanu_123", text: "hey" },
];

const maniMessage: Message = { who: "M", name: "Mani_deep", text: "hey im new to this group" };

const RightBookmarks: React.FC<{ color: string; rule: string; more: string; line?: string; bg?: string }> = ({
  color,
  rule,
  more,
  line,
  bg,
}) => (
  <BookmarkBar $h={line ? 48 : 49} $line={line} $bg={bg}>
    <BookmarkItem $ml={17}>
      <GmailLogo />
      <BookmarkLabel $w={59} $ml={8} $color={color}>
        Gmail
      </BookmarkLabel>
    </BookmarkItem>
    <BookmarkItem $ml={1}>
      <MapsLogo />
      <BookmarkLabel $w={55} $ml={12} $color={color}>
        Maps
      </BookmarkLabel>
    </BookmarkItem>
    <BookmarkItem $ml={0}>
      <YouTubeLogo />
      <BookmarkLabel $w={77} $ml={8} $color={color}>
        YouTube
      </BookmarkLabel>
    </BookmarkItem>
    <BookmarkItem $ml={0}>
      <AniwatchLogo color={color} />
      <BookmarkLabel $w={165} $ml={8} $color={color}>
        Aniwatch Free Anim...
      </BookmarkLabel>
    </BookmarkItem>
    <BookmarkItem $ml={0}>
      <PhotosLogo />
      <BookmarkLabel $w={250} $ml={8} $color={color}>
        PAT 2023 - Google P...
      </BookmarkLabel>
    </BookmarkItem>
    <Slot $w={20} $color={more}>
      <ChevronsRight size={16} />
    </Slot>
    <Separator $color={rule} $ml={18} $h={20} $w={2} />
    <BookmarkItem $ml={18}>
      <FolderLogo />
      <BookmarkLabel $w={100} $ml={8} $color={color}>
        All Bookmarks
      </BookmarkLabel>
    </BookmarkItem>
  </BookmarkBar>
);

export default function App() {
  return (
    <Screen>
      <GlobalStyle />
      <LeftWindow>
        <LeftMain>
          <TopBar $h={28}>
            <ClippedRow $color="#e6e6e6">
              <Slot $w={60}>
                <ChevronLeft size={22} strokeWidth={1.4} />
              </Slot>
              <Slot $w={64}>
                <RotateCw size={20} strokeWidth={1.4} />
              </Slot>
              <AddressBar $bg="#2c2c2c" $w={497} $ml={2}>
                <Slot $w={32} $ml={16}>
                  <MdInfo size={20} />
                </Slot>
                <Url $w={183} $ml={13} $color="#f0f0f0" $dim="#8f8f8f">
                  <b>localhost</b>:3000/main/c...
                </Url>
                <Slot $w={32} $ml={6} $color="#777">
                  <Key size={18} strokeWidth={1.3} />
                </Slot>
                <Slot $w={32} $ml={19} $color="#777">
                  <LayoutGrid size={18} strokeWidth={1.3} />
                </Slot>
                <Slot $w={32} $ml={18} $color="#777">
                  <Search size={18} strokeWidth={1.3} />
                </Slot>
                <Slot $w={32} $ml={16} $color="#777">
                  <Minus size={18} strokeWidth={1.3} />
                </Slot>
                <Slot $w={32} $ml={20} $color="#777">
                  <Star size={18} strokeWidth={1.3} />
                </Slot>
              </AddressBar>
              <Slot $w={72}>
                <Columns2 size={19} strokeWidth={1.3} />
              </Slot>
              <Slot $w={42}>
                <ListPlus size={19} strokeWidth={1.3} />
              </Slot>
              <Slot $w={70}>
                <FilePlus size={19} strokeWidth={1.3} />
              </Slot>
              <Slot $w={34}>
                <Puzzle size={19} strokeWidth={1.3} />
              </Slot>
              <Slot $w={50} $ml={14}>
                <MoreHorizontal size={20} />
              </Slot>
            </ClippedRow>
          </TopBar>
          <BookmarkBar $h={38} $pb={8}>
            <BookmarkItem $ml={16}>
              <ImportLogo />
              <BookmarkLabel $w={104} $ml={8} $color="#e8e8e8">
                Import favorites
              </BookmarkLabel>
            </BookmarkItem>
            <Separator $color="#5c5c5c" $ml={21} $h={20} />
            <BookmarkItem $ml={18}>
              <GmailBoxLogo />
              <BookmarkLabel $w={58} $ml={9} $color="#e8e8e8">
                Gmail
              </BookmarkLabel>
            </BookmarkItem>
            <BookmarkItem $ml={1}>
              <YouTubeLogo />
              <BookmarkLabel $w={80} $ml={10} $color="#e8e8e8">
                YouTube
              </BookmarkLabel>
            </BookmarkItem>
            <BookmarkItem $ml={0}>
              <MapTileLogo />
              <BookmarkLabel $w={59} $ml={10} $color="#e8e8e8">
                Maps
              </BookmarkLabel>
            </BookmarkItem>
            <BookmarkItem $ml={0}>
              <DocLogo />
              <BookmarkLabel $w={128} $ml={10} $color="#e8e8e8">
                Lenovo Support
              </BookmarkLabel>
            </BookmarkItem>
            <BookmarkItem $ml={1}>
              <DocLogo />
              <BookmarkLabel $w={71} $ml={11} $color="#e8e8e8">
                Lenovo
              </BookmarkLabel>
            </BookmarkItem>
            <BookmarkItem $ml={0}>
              <DocLogo />
              <BookmarkLabel $w={60} $ml={11} $color="#e8e8e8">
                McAfee
              </BookmarkLabel>
            </BookmarkItem>
          </BookmarkBar>
          <Viewport>
            <ChatPanel
              slim
              panelW={809}
              panelH={786}
              pad={13}
              sideW={216}
              searchOver={14}
              itemW={208}
              contacts={[
                groupItem(12),
                {
                  letter: "M",
                  avatarW: 37,
                  name: "manideep_834",
                  lines: ["Click here to start", "texting"],
                  tag: "online",
                  tagMl: 2,
                },
              ]}
              messages={leftMessages}
              offset={-60}
              msgBefore={124}
              msgSize={438}
            />
          </Viewport>
        </LeftMain>
        <SideRail>
          <RailLogo>
            <CopilotLogo />
          </RailLogo>
          <RailIcon>
            <GlassIcon />
          </RailIcon>
          <RailIcon>
            <TagIcon />
          </RailIcon>
          <RailIcon>
            <ToolboxIcon />
          </RailIcon>
          <RailIcon>
            <ChessIcon />
          </RailIcon>
          <RailIcon>
            <M365Icon />
          </RailIcon>
          <RailIcon>
            <OutlookIcon />
          </RailIcon>
          <RailIcon>
            <LoopIcon />
          </RailIcon>
          <RailIcon>
            <PlaneIcon />
          </RailIcon>
          <RailIcon>
            <TreeIcon />
          </RailIcon>
          <RailIcon>
            <SpotifyIcon />
          </RailIcon>
          <RailRule $mt={15} />
          <RailButton $h={79}>
            <Plus size={20} strokeWidth={1.4} />
          </RailButton>
          <RailRule $mt={268} />
          <RailButton $h={52}>
            <Settings size={20} strokeWidth={1.4} />
          </RailButton>
        </SideRail>
      </LeftWindow>

      <RightStack>
        <TopWindow>
          <LightChrome>
            <TopBar $h={20}>
              <ClippedRow $color="#333">
                <Slot $w={52} $ml={0}>
                  <ChevronLeft size={22} strokeWidth={1.4} />
                </Slot>
                <Slot $w={26} $color="#999">
                  <ChevronRight size={22} strokeWidth={1.4} />
                </Slot>
                <Slot $w={48}>
                  <RotateCw size={20} strokeWidth={1.4} />
                </Slot>
                <Slot $w={30} $ml={30}>
                  <BookmarkIcon size={20} strokeWidth={1.4} />
                </Slot>
                <AddressBar $bg="#f6f7f9" $w={457} $ml={11}>
                  <Slot $w={24} $ml={8}>
                    <MdInfo size={20} color="#111" />
                  </Slot>
                  <Url $w={134} $ml={15} $color="#222" $dim="#888">
                    <b>localhost</b>:3000/...
                  </Url>
                  <Slot $w={24} $ml={13} $color="#666">
                    <Key size={17} strokeWidth={1.4} />
                  </Slot>
                  <Slot $w={24} $ml={19} $color="#666">
                    <Download size={17} strokeWidth={1.4} />
                  </Slot>
                  <Slot $w={24} $ml={18} $color="#666">
                    <Search size={17} strokeWidth={1.4} />
                  </Slot>
                  <Slot $w={24} $ml={18} $color="#666">
                    <Share size={17} strokeWidth={1.4} />
                  </Slot>
                  <Separator $color="#bbb" $ml={9} $h={22} />
                  <Slot $w={24} $ml={11}>
                    <BraveLogo />
                  </Slot>
                  <Slot $w={24} $ml={19}>
                    <DeltaLogo />
                  </Slot>
                </AddressBar>
                <Slot $w={24} $ml={38}>
                  <Puzzle size={19} strokeWidth={1.4} />
                </Slot>
                <Slot $w={24} $ml={15}>
                  <Music size={19} strokeWidth={1.4} />
                </Slot>
                <Slot $w={24} $ml={14}>
                  <PanelLeft size={19} strokeWidth={1.4} />
                </Slot>
                <Slot $w={24} $ml={13}>
                  <Copy size={19} strokeWidth={1.4} />
                </Slot>
                <ProfilePill>
                  <i />
                  VPN
                </ProfilePill>
                <Slot $w={24} $ml={9}>
                  <Menu size={22} strokeWidth={1.4} />
                </Slot>
              </ClippedRow>
            </TopBar>
            <RightBookmarks color="#333" rule="#b0b2bb" more="#333" line="#b8b8b8" />
          </LightChrome>
          <WindowContent $pt={19}>
            <ChatPanel
              panelW={863}
              panelH={331}
              pad={14}
              sideW={233}
              searchOver={12}
              itemW={197}
              contacts={[
                {
                  letter: "M",
                  avatarW: 37,
                  name: "Mani_deep",
                  lines: ["Click here to", "start texting"],
                  tag: "online",
                  tagMl: 14,
                },
              ]}
              listThumb={[0, 21]}
              messages={[maniMessage, { who: "B", name: "bhanu_123", text: "hey" }]}
              offset={-19}
              msgBefore={98}
              msgSize={25}
            />
          </WindowContent>
        </TopWindow>
        <BottomWindow>
          <TabStrip>
            <Tab>
              <Slot $w={22} $ml={15}>
                <ReactLogo />
              </Slot>
              <TabTitle>LiveChat</TabTitle>
              <Slot $w={24}>
                <X size={15} strokeWidth={2} />
              </Slot>
            </Tab>
            <Slot $w={26} $ml={14}>
              <Plus size={18} strokeWidth={1.4} />
            </Slot>
            <Slot $w={24} $ml={413}>
              <ChevronDown size={18} strokeWidth={1.8} />
            </Slot>
            <Slot $w={24} $ml={25} $color="#f0f0f0">
              <Minus size={18} strokeWidth={1.3} />
            </Slot>
            <Slot $w={24} $ml={32} $color="#f0f0f0">
              <Square size={14} strokeWidth={1.3} />
            </Slot>
            <Slot $w={24} $ml={33} $color="#f0f0f0">
              <X size={19} strokeWidth={1.2} />
            </Slot>
          </TabStrip>
          <NavBar>
            <Slot $w={40} $ml={7}>
              <ChevronLeft size={23} strokeWidth={1.5} />
            </Slot>
            <Slot $w={38} $color="#5f45a8">
              <ChevronRight size={23} strokeWidth={1.5} />
            </Slot>
            <Slot $w={36}>
              <RotateCw size={20} strokeWidth={1.6} />
            </Slot>
            <Slot $w={34} $ml={18}>
              <BookmarkIcon size={20} strokeWidth={1.5} />
            </Slot>
            <AddressBar $bg="#14062b" $w={593} $ml={11} $h={40}>
              <Slot $w={24} $ml={7}>
                <MdInfo size={20} color="#fff" />
              </Slot>
              <Url $w={440} $ml={17} $color="#fff" $dim="#8b7fa3" $wide>
                <b>localhost</b>:3000/main/chat/group%20test/668bec56905...
              </Url>
              <Slot $w={24} $ml={11} $color="#d0d0d0">
                <ZoomOut size={19} strokeWidth={1.3} />
              </Slot>
              <Separator $color="#7a6f90" $ml={9} $h={22} />
              <Slot $w={24} $ml={11}>
                <BraveLogo />
              </Slot>
            </AddressBar>
            <Slot $w={24} $ml={60}>
              <PanelLeft size={20} strokeWidth={1.8} />
            </Slot>
            <GlassesBox>
              <SunglassesIcon />
            </GlassesBox>
            <Slot $w={24} $ml={8}>
              <Menu size={22} strokeWidth={1.5} />
            </Slot>
          </NavBar>
          <RightBookmarks color="#f0f0f0" rule="#14062b" more="#8b6fe8" bg="#2a0f5a" />
          <WindowContent $pt={18}>
            <ChatPanel
              panelW={863}
              panelH={331}
              pad={14}
              sideW={233}
              searchOver={12}
              itemW={212}
              contacts={[groupItem(12)]}
              listThumb={[0, 24]}
              messages={[maniMessage, { who: "", name: "", text: "hey", mine: true, time: "12:00 am" }]}
              offset={-23}
              msgBefore={98}
              msgSize={25}
            />
          </WindowContent>
        </BottomWindow>
      </RightStack>
    </Screen>
  );
}
